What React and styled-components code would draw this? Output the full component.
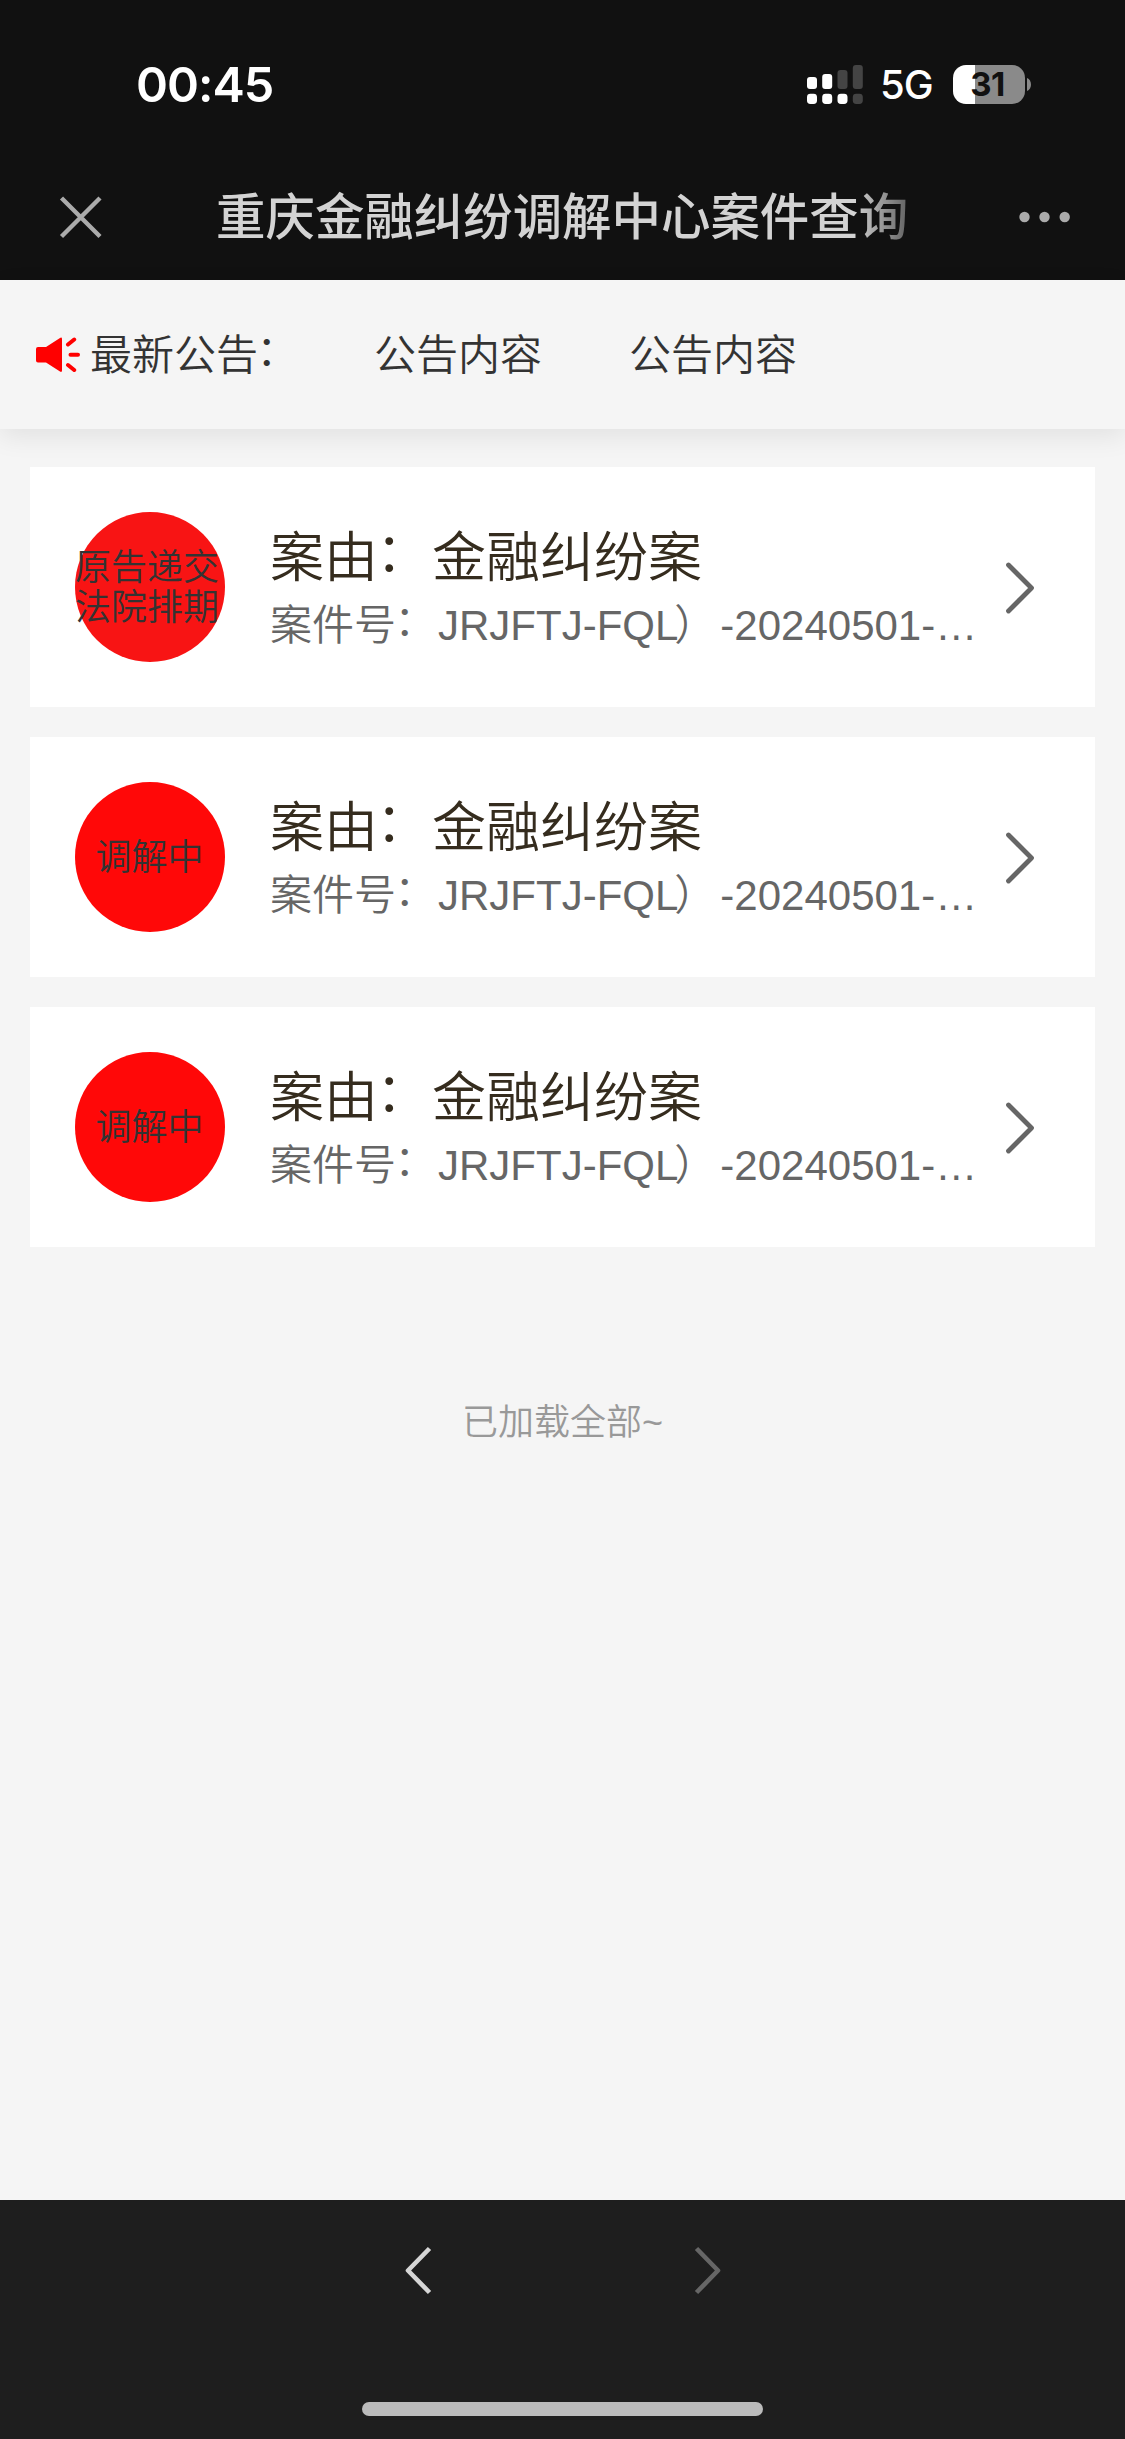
import React from "react";
import styled, { createGlobalStyle } from "styled-components";

const GlobalStyle = createGlobalStyle`
  * { box-sizing: border-box; }
  body {
    margin: 0;
    background: #f5f5f5;
    font-family: "Liberation Sans", "Noto Sans CJK SC", sans-serif;
    font-weight: 350;
    color: #333;
  }
`;

const Screen = styled.div`
  display: flex;
  flex-direction: column;
  width: 1125px;
  height: 2439px;
  overflow: hidden;
  background: #f5f5f5;
`;

const Header = styled.header`
  flex: none;
  height: 280px;
  background: #111;
`;

const StatusBar = styled.div`
  display: flex;
  align-items: center;
  justify-content: space-between;
  height: 152px;
  padding: 16px 94px 0 136px;
  font-family: Inter, sans-serif;
  color: #fff;
`;

const Time = styled.span`
  padding-top: 2px;
  font-size: 48.5px;
  font-weight: 600;
  line-height: 60px;
  letter-spacing: -1px;
`;

const StatusIcons = styled.div`
  display: flex;
  align-items: center;
`;

const Network = styled.span`
  width: 71px;
  padding: 2px 0 0 17px;
  font-size: 40px;
  font-weight: 500;
  line-height: 48px;
  letter-spacing: -1px;
  white-space: nowrap;
`;

const Battery = styled.div`
  display: flex;
  align-items: center;
  justify-content: center;
  width: 72px;
  height: 39px;
  margin-left: 19px;
  padding-right: 3px;
  border-radius: 13px;
  background: linear-gradient(to right, #fff 22px, #8a8a8a 22px);
  color: #111;
  font-size: 33px;
  font-weight: 700;
  line-height: 39px;
  letter-spacing: -0.5px;
`;

const BatteryTip = styled.svg`
  width: 4px;
  height: 13px;
  margin-left: 2px;
`;

const NavBar = styled.div`
  display: flex;
  align-items: center;
  height: 128px;
  padding: 0 55px 0 58px;
`;

const NavTitle = styled.h1`
  width: 694px;
  margin: 4px 0 0 113px;
  overflow: hidden;
  font-size: 49.45px;
  font-weight: 500;
  line-height: 72px;
  white-space: nowrap;
  color: #d3d3d3;
  mask-image: linear-gradient(to right, #000 638px, rgba(0, 0, 0, 0.4) 694px);
`;

const CloseIcon = styled.svg`
  flex: none;
  width: 45px;
  height: 45px;
`;

const MoreIcon = styled.svg`
  width: 52px;
  height: 12px;
  margin: 1px 0 0 auto;
`;

const Notice = styled.section`
  flex: none;
  display: flex;
  align-items: center;
  height: 149px;
  padding-left: 36px;
  background: #f5f5f5;
  box-shadow: 0 8px 24px rgba(0, 0, 0, 0.08);
  font-size: 42px;
  line-height: 60px;
  white-space: nowrap;
`;

const HornIcon = styled.svg`
  width: 44px;
  height: 36px;
  margin-right: 10px;
`;

const NoticeLabel = styled.span`
  width: 284px;
  padding-top: 2px;
`;

const NoticeItem = styled.span`
  width: 255px;
  padding-top: 2px;
`;

const Colon = styled.span`
  margin: 0 0.04em 0 -0.04em;
  line-height: 0;
  vertical-align: 0.085em;
`;

const Paren = styled.span`
  margin: 0 0.1em 0 -0.1em;
`;

const CaseList = styled.main`
  flex: 1;
  display: flex;
  flex-direction: column;
  gap: 30px;
  padding: 38px 30px 0;
`;

const Card = styled.article`
  display: flex;
  align-items: center;
  height: 240px;
  padding: 0 60px 0 45px;
  background: #fff;
`;

const Status = styled.div`
  flex: none;
  display: flex;
  align-items: center;
  justify-content: center;
  width: 150px;
  height: 150px;
  padding: 1px 1px 0 0;
  border-radius: 50%;
  background: ${(p) => (p.$pending ? "#f81414" : "#ff0808")};
  font-size: 36px;
  line-height: 40px;
  word-break: break-all;
`;

const CaseText = styled.div`
  width: 705px;
  margin-left: 45px;
  padding-top: 5px;
  white-space: nowrap;
`;

const Cause = styled.div`
  font-size: 54px;
  line-height: 72px;
  color: #352c1e;
`;

const CaseNumber = styled.div`
  font-size: 42px;
  line-height: 64px;
  color: #666;
`;

const CardArrow = styled.svg`
  width: 30px;
  height: 54px;
  margin: 2px 0 0 auto;
`;

const LoadedText = styled.p`
  margin: 116px 0 0;
  font-size: 36px;
  line-height: 60px;
  text-align: center;
  color: #999;
`;

const BottomBar = styled.footer`
  flex: none;
  display: flex;
  flex-direction: column;
  align-items: center;
  justify-content: space-between;
  height: 239px;
  padding: 45px 0 23px;
  background: #1e1e1e;
`;

const HistoryButtons = styled.nav`
  display: flex;
  justify-content: space-between;
  width: 320px;
`;

const HistoryIcon = styled.svg`
  width: 30px;
  height: 52px;
`;

const HomeIndicator = styled.div`
  width: 401px;
  height: 14px;
  border-radius: 7px;
  background: #bbb;
`;

const signalBars = [
  { x: 1, top: 12, on: true, dot: true },
  { x: 16.2, top: 9, on: true, dot: true },
  { x: 31.5, top: 5, on: false, dot: true },
  { x: 46.8, top: 0, on: false, dot: false },
];

const SignalIcon = () => (
  <svg width="57" height="39" viewBox="0 0 57 39">
    {signalBars.map((b) => (
      <g key={b.x}>
        <rect x={b.x} y={b.top} width="10" height={24 - b.top} rx="3" fill={b.on ? "#fff" : "#444"} />
        <rect x={b.x} y="28.7" width="10" height="10.3" rx="3.4" fill={b.dot ? "#fff" : "#444"} />
      </g>
    ))}
  </svg>
);

const cases = [
  { id: 1, status: "原告递交法院排期", pending: true },
  { id: 2, status: "调解中" },
  { id: 3, status: "调解中" },
];

export default function App() {
  return (
    <Screen>
      <GlobalStyle />
      <Header>
        <StatusBar>
          <Time>00:45</Time>
          <StatusIcons>
            <SignalIcon />
            <Network>5G</Network>
            <Battery>31</Battery>
            <BatteryTip viewBox="0 0 4 13">
              <path d="M0 0C5.3 2 5.3 11 0 13Z" fill="#8a8a8a" />
            </BatteryTip>
          </StatusIcons>
        </StatusBar>
        <NavBar>
          <CloseIcon viewBox="0 0 45 45" stroke="#ababab" strokeWidth="4.4">
            <path d="M3.500 4 42 42.500M42 4 3.500 42.500" />
          </CloseIcon>
          <NavTitle>重庆金融纠纷调解中心案件查询</NavTitle>
          <MoreIcon viewBox="0 0 52 12" fill="#ababab">
            <circle cx="6.500" cy="6" r="5.200" />
            <circle cx="26.500" cy="6" r="5.200" />
            <circle cx="46.700" cy="6" r="5.200" />
          </MoreIcon>
        </NavBar>
      </Header>

      <Notice>
        <HornIcon viewBox="0 0 44 36" fill="none" stroke="#f00" strokeWidth="4" strokeLinecap="round">
          <path d="M2 10H10L24 .900Q26 0 26 2V33.500Q26 35.500 24 34.600L10 25.500H2Q0 25.500 0 23.500V12Q0 10 2 10Z" fill="#f00" stroke="none" />
          <path d="M32 7.500 38.200 2.500M34.500 17.700H42M32 28 38.200 33" />
        </HornIcon>
        <NoticeLabel>最新公告<Colon>：</Colon></NoticeLabel>
        <NoticeItem>公告内容</NoticeItem>
        <NoticeItem>公告内容</NoticeItem>
      </Notice>

      <CaseList>
        {cases.map((c) => (
          <Card key={c.id}>
            <Status $pending={c.pending}>{c.status}</Status>
            <CaseText>
              <Cause>案由<Colon>：</Colon>金融纠纷案</Cause>
              <CaseNumber>
                案件号<Colon>：</Colon>JRJFTJ-FQL<Paren>）</Paren>-20240501-…
              </CaseNumber>
            </CaseText>
            <CardArrow viewBox="0 0 30 54" fill="none" stroke="#666" strokeWidth="4.800" strokeLinecap="round" strokeLinejoin="round">
              <path d="M3.500 4 26.500 27 3.500 50" />
            </CardArrow>
          </Card>
        ))}
        <LoadedText>已加载全部~</LoadedText>
      </CaseList>

      <BottomBar>
        <HistoryButtons>
          <HistoryIcon viewBox="0 0 30 52" fill="none" stroke="#d6d6d6" strokeWidth="4.600" strokeLinejoin="round">
            <path d="M26.500 3.500 5 25.500 26.500 47.500" />
          </HistoryIcon>
          <HistoryIcon viewBox="0 0 30 52" fill="none" stroke="#666" strokeWidth="4.600" strokeLinejoin="round">
            <path d="M3.500 3.500 25 25.500 3.500 47.500" />
          </HistoryIcon>
        </HistoryButtons>
        <HomeIndicator />
      </BottomBar>
    </Screen>
  );
}
